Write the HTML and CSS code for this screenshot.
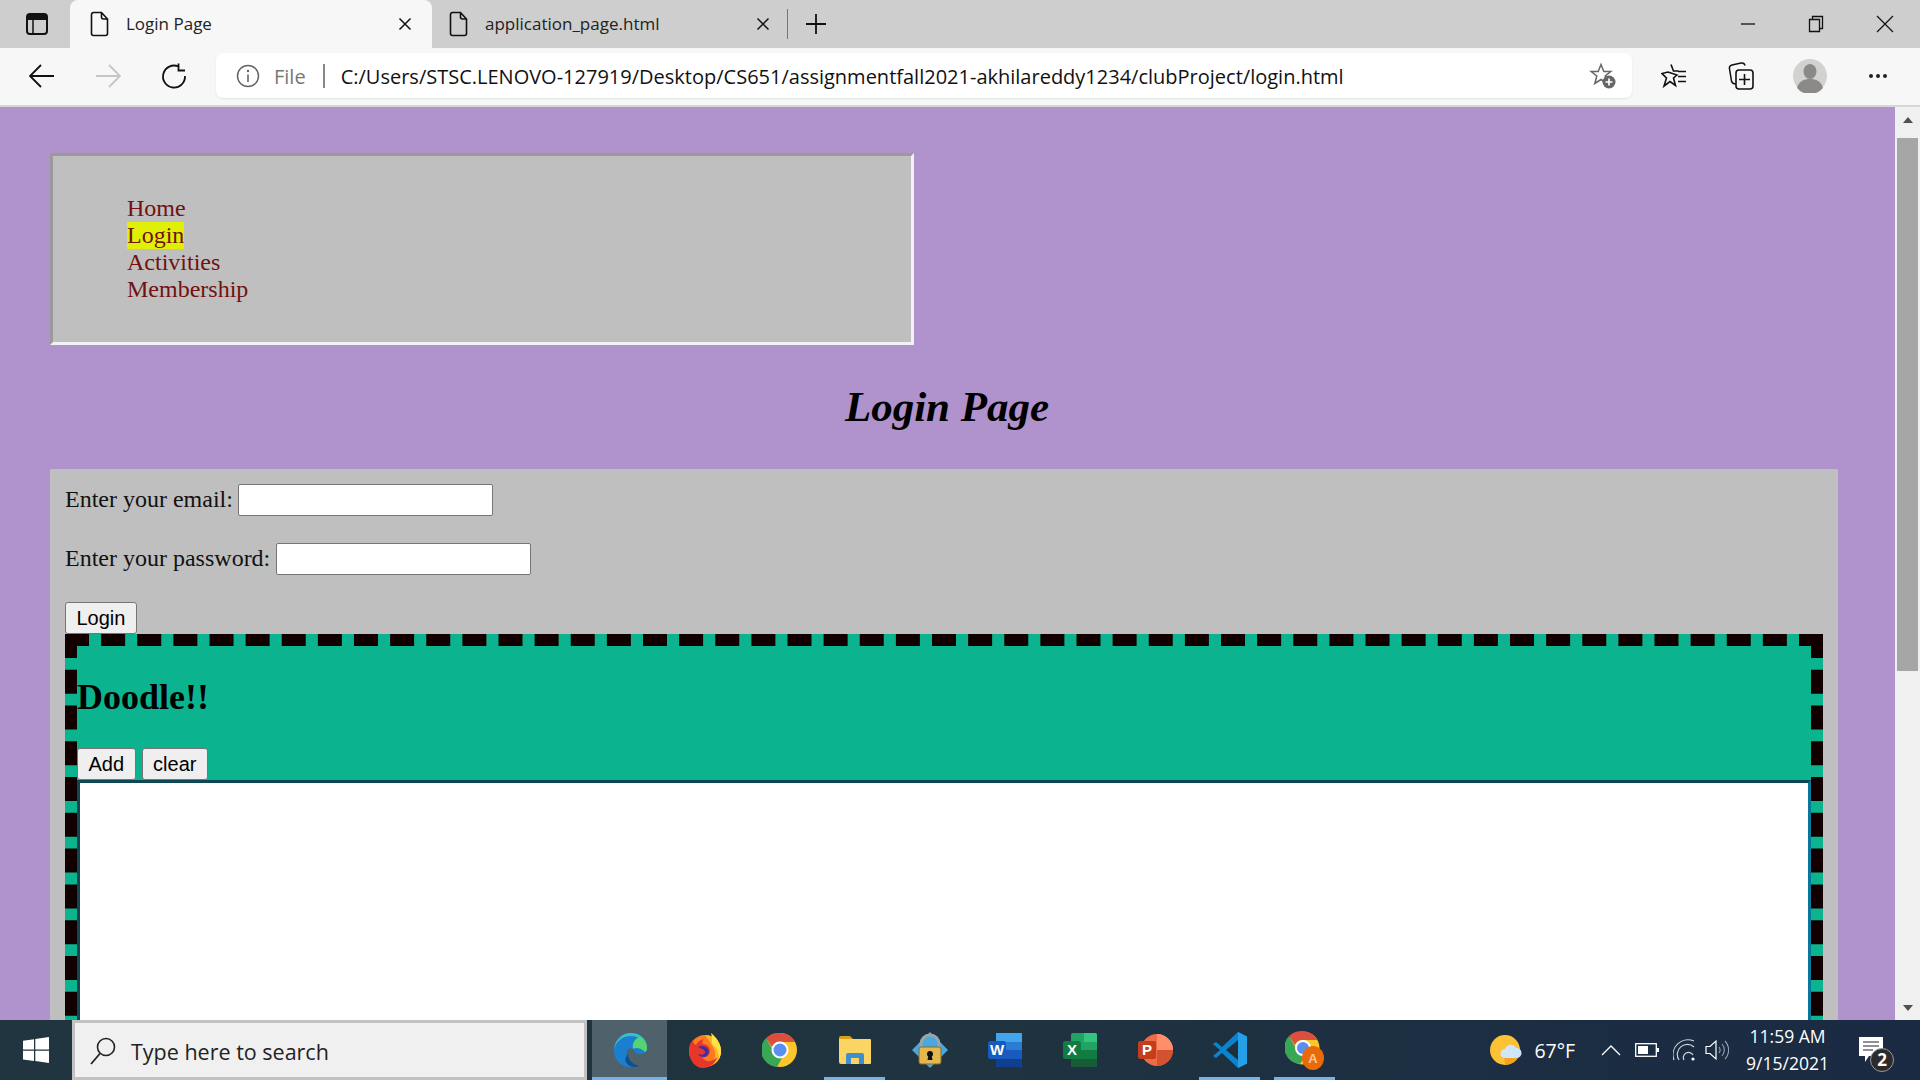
FILE: index.html
```html
<!DOCTYPE html>
<html>
    <head>
        <title>Login Page</title>
        <meta http-equiv="Content-Type" content="text/html; charset=utf-8"/>
        <link rel="stylesheet" href="styles.css">
    </head>
    <body>

    <svg class="defs" width="0" height="0">
        <symbol id="pageIcon" viewBox="0 0 20 26"><path d="M3.5 1.5h8l6 6.5v14.5a2 2 0 0 1-2 2h-12a2 2 0 0 1-2-2v-19a2 2 0 0 1 2-2zM11.5 1.5v4.500a2 2 0 0 0 2 2h4" fill="none" stroke="#111" stroke-width="1.600"/></symbol>
        <symbol id="closeIcon" viewBox="0 0 14 14"><path d="M1.500 1.500l11 11M12.500 1.500l-11 11" fill="none" stroke="#111" stroke-width="1.500"/></symbol>
    </svg>

    <div id="tabStrip">
        <div class="sidebarBtn">
            <svg width="22" height="22" viewBox="0 0 22 22"><rect x="1" y="1" width="20" height="20" rx="3" fill="none" stroke="#111" stroke-width="2"/><path d="M2 2h18v5H2z" fill="#111"/><path d="M7 7v14" stroke="#111" stroke-width="1.500"/></svg>
        </div>
        <div class="tab active">
            <svg class="tabIcon" width="20" height="26"><use href="#pageIcon"/></svg>
            <span class="tabTitle">Login Page</span>
            <svg class="tabClose" width="14" height="14"><use href="#closeIcon"/></svg>
        </div>
        <div class="tab">
            <svg class="tabIcon" width="20" height="26"><use href="#pageIcon"/></svg>
            <span class="tabTitle">application_page.html</span>
            <svg class="tabClose" width="14" height="14"><use href="#closeIcon"/></svg>
        </div>
        <div class="tabDivider"></div>
        <svg class="newTab" width="22" height="22" viewBox="0 0 22 22"><path d="M11 1v20M1 11h20" stroke="#111" stroke-width="1.800"/></svg>
        <div class="windowBtns">
            <svg width="16" height="16" viewBox="0 0 16 16"><path d="M1 8h14" stroke="#111" stroke-width="1.300"/></svg>
            <svg width="16" height="18" viewBox="0 0 16 18"><path d="M1.500 4.500h10v12h-10zM4.500 4.500v-3h10v12h-3" fill="none" stroke="#111" stroke-width="1.300"/></svg>
            <svg width="18" height="18" viewBox="0 0 18 18"><path d="M1 1l16 16M17 1L1 17" stroke="#111" stroke-width="1.200"/></svg>
        </div>
    </div>

    <div id="toolbar">
        <svg class="navIcon" width="26" height="24" viewBox="0 0 26 24"><path d="M1 12h24M12 1L1 12l11 11" fill="none" stroke="#111" stroke-width="1.800"/></svg>
        <svg class="navIcon" width="26" height="24" viewBox="0 0 26 24"><path d="M25 12H1M14 1l11 11-11 11" fill="none" stroke="#c6c6c6" stroke-width="1.800"/></svg>
        <svg class="navIcon" width="26" height="26" viewBox="0 0 26 26"><path d="M17.500 3.500A11 11 0 1 0 24 13M17.500 0.500v7h6.500" fill="none" stroke="#111" stroke-width="1.800"/></svg>
        <div id="addressBar">
            <svg class="infoIcon" width="24" height="24" viewBox="0 0 24 24"><circle cx="12" cy="12" r="10.500" fill="none" stroke="#666" stroke-width="1.500"/><path d="M12 10.500v7.500" stroke="#666" stroke-width="1.600"/><circle cx="12" cy="7" r="1.200" fill="#666"/></svg>
            <span class="fileLabel">File</span>
            <span class="addressSep"></span>
            <span class="url">C:/Users/STSC.LENOVO-127919/Desktop/CS651/assignmentfall2021-akhilareddy1234/clubProject/login.html</span>
            <svg class="starAdd" width="28" height="28" viewBox="0 0 28 28"><path d="M12 2.500l2.800 7h7l-5.600 4.500 2 7.500L12 17.500 5.800 21.500l2-7.500L2.200 9.500h7z" fill="none" stroke="#666" stroke-width="1.500"/><circle cx="20" cy="20" r="6.500" fill="#666"/><path d="M20 16.500v7M16.500 20h7" stroke="#fff" stroke-width="1.700"/></svg>
        </div>
        <div class="toolIcons">
            <svg width="28" height="28" viewBox="0 0 28 28"><path d="M10 2.500l2.500 6.500h5M16 13l-3.500 3 2 7.500L9 19.500 3 24l2.500-8L1 11.500l6-1.500z" fill="none" stroke="#111" stroke-width="1.600"/><path d="M17 9.500h8M17 14.500h8M17 19.500h8" stroke="#111" stroke-width="1.600"/></svg>
            <svg width="28" height="30" viewBox="0 0 28 30"><path d="M9 23c-3 0-4-1-4.500-3L2.500 8c-.4-2 .5-3.500 2.500-4l9-2c2-.4 3.500.3 4 2.500" fill="none" stroke="#111" stroke-width="1.500"/><rect x="9" y="9" width="17" height="19" rx="3" fill="none" stroke="#111" stroke-width="1.600"/><path d="M17.500 13v11M12 18.500h11" stroke="#111" stroke-width="1.600"/></svg>
            <svg class="avatar" width="34" height="34" viewBox="0 0 34 34"><circle cx="17" cy="17" r="17" fill="#d2d2d0"/><ellipse cx="17" cy="12.500" rx="6.500" ry="7.500" fill="#8c8a88"/><path d="M4 29c2-7 7-9 13-9s11 2 13 9a17 17 0 0 1-26 0z" fill="#8c8a88"/></svg>
            <div class="moreDots"><i></i><i></i><i></i></div>
        </div>
    </div>

    <div id="viewport">
        <div id="page">
            <div id="navBox">
                <ul>
                    <li><a>Home</a></li>
                    <li><a class="current">Login</a></li>
                    <li><a>Activities</a></li>
                    <li><a>Membership</a></li>
                </ul>
            </div>

            <h1>Login Page</h1>

            <div id="loginPanel">
                <div class="formRow emailRow">
                    <label>Enter your email:</label>
                    <input type="text">
                </div>
                <div class="formRow">
                    <label>Enter your password:</label>
                    <input type="password">
                </div>
                <div class="formRow">
                    <button>Login</button>
                </div>
                <div id="doodle">
                    <h2>Doodle!!</h2>
                    <div class="doodleBtns">
                        <button>Add</button>
                        <button>clear</button>
                    </div>
                    <div id="canvas"></div>
                </div>
            </div>
        </div>
        <div id="scrollbar">
            <div class="arrowUp"></div>
            <div class="thumb"></div>
            <div class="arrowDown"></div>
        </div>
    </div>

    <div id="taskbar">
        <div class="startBtn">
            <svg width="26" height="26" viewBox="0 0 26 26"><path d="M0 3.800l11-1.500v10.200H0zM12.300 2.100L26 0v12.500H12.300zM0 13.800h11V24L0 22.400zM12.300 13.800H26V26l-13.700-2z" fill="#fff"/></svg>
        </div>
        <div class="searchBox">
            <svg width="26" height="28" viewBox="0 0 26 28"><circle cx="16" cy="10" r="8.500" fill="none" stroke="#222" stroke-width="1.600"/><path d="M10 16.500L1 27" stroke="#222" stroke-width="1.800"/></svg>
            <span>Type here to search</span>
        </div>
        <div class="appIcons">
            <div class="app hover">
                <svg width="36" height="36" viewBox="0 0 36 36"><path d="M2 19C2 8 10 1 19 1c9 0 16 7 16 15 0 4-3 6-7 6-5 0-5-3-7-5-1.500-1.500-5-1-6 2-1.500 5 2 12 9 15-1 .5-3 1-6 1C9 35 2 28 2 19z" fill="#1a7fd0"/><path d="M2 19C3 10 10 4 19 4c7 0 13 4 16 12 0-9-7-15-16-15C10 1 2 8 2 19z" fill="#35c1c9"/><path d="M21 17c3-2 8-1 12 3 2-1 2-2.500 2-4 0-5-3-9-7-11-5 1-8 6-7 12z" fill="#56d46f"/><path d="M16 22c0 6 5 11 12 12-1 .5-5 1.500-9 .5-5-2-8-7-3-12.500z" fill="#0e4f94"/></svg>
            </div>
            <div class="app">
                <svg width="36" height="36" viewBox="0 0 36 36"><circle cx="18" cy="19" r="16" fill="#ff7a1f"/><path d="M18 3c10 0 16 8 16 16 0 8-5 14-12 15 6-4 8-12 4-19-2-4-5-7-8-12z" fill="#ffb326"/><path d="M2 19c0-5 1-8 4-11 0 3 1 4 3 5 1-3 4-5 8-6-2 2-2 4-1 5 4 0 7 3 7 7s-4 7-8 6c4 6 11 5 15 0-1 6-7 11-14 11C8 36 2 28 2 19z" fill="#e9362b"/><path d="M24 1c5 4 10 10 10 18 0 3-1 6-2 8 0-8-3-12-7-15 0-4 0-7-1-11z" fill="#ffe14a"/><path d="M11 15c3-2 8-1 10 2s0 7-3 8c-3 .5-6-1-7-3 3 1 6 1 7-1 1-2-2-4-7-6z" fill="#3d2fa8"/></svg>
            </div>
            <div class="app">
                <svg width="36" height="36" viewBox="0 0 36 36"><circle cx="18" cy="18" r="17" fill="#fbc52e"/><path d="M18 1a17 17 0 0 1 15 9H18a8 8 0 0 0-8 5L4 6a17 17 0 0 1 14-5z" fill="#dc4f3f"/><path d="M4 6l8 14a8 8 0 0 0 8 6l-5 9A17 17 0 0 1 4 6z" fill="#3aa757"/><circle cx="18" cy="18" r="8.500" fill="#fff"/><circle cx="18" cy="18" r="6.500" fill="#5a8ff0"/></svg>
            </div>
            <div class="app running">
                <svg width="34" height="30" viewBox="0 0 34 30"><path d="M1 3a2 2 0 0 1 2-2h9l3 3h-14z" fill="#d9a019"/><path d="M1 4h31a1 1 0 0 1 1 1v23a1 1 0 0 1-1 1H3a2 2 0 0 1-2-2z" fill="#fbd564"/><path d="M8 29v-9a2 2 0 0 1 2-2h14a2 2 0 0 1 2 2v9h-5v-6h-8v6z" fill="#3d8fd0"/></svg>
            </div>
            <div class="app">
                <svg width="36" height="36" viewBox="0 0 36 36"><path d="M18 0l18 18-18 18L0 18z" fill="#49a8e0"/><path d="M9 16v-4a9 9 0 0 1 18 0v4" fill="none" stroke="#9aa5ab" stroke-width="3"/><rect x="7" y="15" width="22" height="17" rx="2" fill="#e3b94f" stroke="#8b6b1f"/><circle cx="18" cy="22" r="3" fill="#111"/><path d="M16.500 23h3l1 5h-5z" fill="#111"/></svg>
            </div>
            <div class="app">
                <svg width="36" height="36" viewBox="0 0 36 36"><rect x="9" y="1" width="26" height="34" rx="2" fill="#2b7cd3"/><path d="M9 1h26v9H9z" fill="#41a5ee"/><path d="M9 18h26v9H9z" fill="#185abd"/><path d="M9 27h26v6a2 2 0 0 1-2 2H11a2 2 0 0 1-2-2z" fill="#103f91"/><rect x="1" y="9" width="18" height="18" rx="2" fill="#185abd"/><text x="10" y="23" class="appLetter">W</text></svg>
            </div>
            <div class="app">
                <svg width="36" height="36" viewBox="0 0 36 36"><rect x="9" y="1" width="26" height="34" rx="2" fill="#21a366"/><path d="M22 1h11a2 2 0 0 1 2 2v7H22z" fill="#33c481"/><path d="M9 18h26v9H9z" fill="#107c41"/><path d="M9 27h26v6a2 2 0 0 1-2 2H11a2 2 0 0 1-2-2z" fill="#185c37"/><rect x="1" y="9" width="18" height="18" rx="2" fill="#107c41"/><text x="10" y="23" class="appLetter">X</text></svg>
            </div>
            <div class="app">
                <svg width="36" height="36" viewBox="0 0 36 36"><circle cx="20" cy="18" r="16" fill="#ed6c47"/><path d="M20 2a16 16 0 0 1 16 16H20z" fill="#ff8f6b"/><path d="M20 18h16a16 16 0 0 1-16 16z" fill="#d35230"/><rect x="1" y="9" width="18" height="18" rx="2" fill="#c43e1c"/><text x="10" y="23" class="appLetter">P</text></svg>
            </div>
            <div class="app running">
                <svg width="36" height="38" viewBox="0 0 36 38"><path d="M26 1l9 4.500v27L26 37 10 22l-6 5-3-2 7-6-7-6 3-2 6 5z" fill="#0a84cf"/><path d="M26 9v20L14 19z" fill="#1f2f3a"/><path d="M26 1l9 4.500v27L26 37z" fill="#23a0e6"/></svg>
            </div>
            <div class="app running">
                <svg width="40" height="40" viewBox="0 0 40 40"><circle cx="18" cy="18" r="16.500" fill="#fbc52e"/><path d="M18 1.500a16.500 16.500 0 0 1 14.500 8.500H18a8 8 0 0 0-8 5L4 6a16.500 16.500 0 0 1 14-4.500z" fill="#dc4f3f"/><path d="M4 6l8 14a8 8 0 0 0 8 6l-5 8A16.500 16.500 0 0 1 4 6z" fill="#3aa757"/><circle cx="18" cy="18" r="8" fill="#fff"/><circle cx="18" cy="18" r="6" fill="#5a8ff0"/><ellipse cx="28" cy="28" rx="11" ry="12" fill="#ea6a0a"/><text x="28" y="33" class="badgeLetter">A</text></svg>
            </div>
        </div>
        <div class="tray">
            <svg class="weatherIcon" width="32" height="32" viewBox="0 0 32 32"><circle cx="15" cy="16" r="15" fill="#fcc234"/><path d="M15 31a15 15 0 0 0 14-9H14z" fill="#f3a21c"/><path d="M15 24a4.500 4.500 0 0 1 0-9 6 6 0 0 1 11-1 5 5 0 0 1 1 10z" fill="#cfe6fa"/></svg>
            <span class="temp">67°F</span>
            <svg width="20" height="12" viewBox="0 0 20 12"><path d="M1 11l9-9 9 9" fill="none" stroke="#fff" stroke-width="1.300"/></svg>
            <svg width="24" height="14" viewBox="0 0 24 14"><rect x=".7" y=".7" width="20.600" height="12.600" fill="none" stroke="#fff" stroke-width="1.300"/><rect x="3" y="3" width="10" height="8" fill="#fff"/><path d="M22 5h2v4h-2z" fill="#fff"/></svg>
            <svg width="24" height="22" viewBox="0 0 24 22"><path d="M1 21a15 15 0 0 1 20-19M6 21a10 10 0 0 1 15-13M11 21a5 5 0 0 1 9-5" fill="none" stroke="#cfd3da" stroke-width="1.200"/><circle cx="20" cy="20" r="1.600" fill="#fff"/></svg>
            <svg class="speaker" width="24" height="22" viewBox="0 0 24 22"><path d="M1 7.500h4l6-5.500v18l-6-5.500H1z" fill="none" stroke="#fff" stroke-width="1.200"/><path d="M14 8a5 5 0 0 1 0 6M17 5a9 9 0 0 1 0 12M20 2a13 13 0 0 1 0 18" fill="none" stroke="#9aa3ad" stroke-width="1.100"/></svg>
            <div class="clock">
                <span>11:59 AM</span>
                <span>9/15/2021</span>
            </div>
            <div class="notify">
                <svg width="24" height="26" viewBox="0 0 24 26"><path d="M0 0h24v19H10l-4 6v-6H0z" fill="#fff"/><path d="M4 5h16M4 9h16M4 13h10" stroke="#223" stroke-width="1.200"/></svg>
                <span class="notifyBadge">2</span>
            </div>
        </div>
    </div>

    </body>
</html>
```

FILE: styles.css
```css
html, body {
    height: 100%;
    margin: 0;
    padding: 0;
    overflow: hidden;
}

body {
    display: flex;
    flex-direction: column;
    font-family: "Liberation Serif", serif;
}

.defs {
    position: absolute;
}

/**** BROWSER CHROME ****/

#tabStrip {
    display: flex;
    align-items: center;
    height: 48px;
    flex: none;
    background-color: #cecece;
    font-family: "Open Sans", sans-serif;
    font-size: 17px;
    color: #222;
}

.sidebarBtn {
    display: flex;
    justify-content: center;
    width: 70px;
    padding-left: 2px;
    margin-right: -2px;
}

.tab {
    display: flex;
    align-items: center;
    box-sizing: border-box;
    width: 362px;
    height: 48px;
    padding: 0 20px 0 20px;
}

.tab.active {
    background-color: #f7f7f7;
    border-radius: 8px 8px 0 0;
}

.tab + .tab {
    width: 355px;
    padding: 0 17px 0 17px;
}

.tabIcon {
    flex: none;
}

.tabTitle {
    flex: 1;
    margin: 0 0 2px 16px;
}

.tabDivider {
    width: 1px;
    height: 30px;
    background-color: #777;
}

.newTab {
    margin-left: 17px;
}

.windowBtns {
    display: flex;
    align-items: center;
    gap: 52px;
    margin-left: auto;
    margin-right: 26px;
}

#toolbar {
    display: flex;
    align-items: center;
    box-sizing: border-box;
    height: 59px;
    flex: none;
    padding: 0 0 2px 29px;
    background-color: #f7f7f7;
    border-bottom: 2px solid #d6d6d6;
}

.navIcon {
    margin-right: 40px;
}

#addressBar {
    display: flex;
    align-items: center;
    box-sizing: border-box;
    width: 1416px;
    height: 45px;
    margin-left: -11px;
    padding: 0 15px 0 20px;
    background-color: white;
    border-radius: 7px;
    box-shadow: 0 1px 2px rgba(0, 0, 0, 0.08);
}

.fileLabel {
    margin-left: 14px;
    padding-top: 2px;
    font: 20px "Open Sans", sans-serif;
    color: #777;
}

.addressSep {
    width: 2px;
    height: 24px;
    margin: 0 16px 0 17px;
    background-color: #888;
}

.url {
    flex: 1;
    padding-top: 2px;
    font: 20px "Open Sans", sans-serif;
    color: #111;
    white-space: nowrap;
}

.toolIcons {
    display: flex;
    align-items: center;
    gap: 38px;
    margin-left: 29px;
}

.avatar {
    margin: 0 -2px 0 0;
}

.moreDots {
    display: flex;
    gap: 3px;
    margin-left: 6px;
}

.moreDots i {
    width: 4px;
    height: 4px;
    border-radius: 50%;
    background-color: #222;
}

/**** PAGE ****/

#viewport {
    display: flex;
    flex: 1;
    min-height: 0;
}

#page {
    flex: 1;
    min-width: 0;
    overflow: hidden;
    padding: 46px 57px 0 50px;
    background-color: #b092cc;
}

#navBox {
    box-sizing: border-box;
    width: 864px;
    height: 192px;
    padding: 39px 0 0 74px;
    background-color: #bfbfbf;
    border: 3px solid;
    border-color: #9a9a9a #f2f2f2 #f2f2f2 #9a9a9a;
    font-size: 24px;
    line-height: 27px;
    color: #731010;
}

#navBox ul {
    list-style: none;
    margin: 0;
    padding: 0;
}

#navBox a {
    display: inline-block;
}

#navBox a.current {
    background-color: #e0ef06;
}

h1 {
    height: 124px;
    margin: 0;
    padding-left: 6px;
    font-size: 43px;
    font-style: italic;
    font-weight: bold;
    line-height: 124px;
    text-align: center;
    color: black;
}

#loginPanel {
    padding: 15px 15px 0 15px;
    background-color: #bfbfbf;
}

.formRow {
    display: flex;
    align-items: center;
    gap: 6px;
    height: 32px;
    margin-bottom: 27px;
    font-size: 24px;
    color: #111;
}

.formRow.emailRow {
    gap: 5px;
}

.formRow label {
    margin-bottom: 2px;
}

.formRow:nth-child(3) {
    margin-bottom: 0;
}

input {
    box-sizing: border-box;
    width: 255px;
    height: 32px;
    padding: 0;
    background-color: white;
    border: 1px solid #767676;
    border-radius: 2px;
}

button {
    box-sizing: border-box;
    height: 32px;
    padding: 0 10.500px;
    font: 20px "Liberation Sans", sans-serif;
    color: black;
    background-color: #efefef;
    border: 1px solid #767676;
    border-radius: 3px;
}

#doodle {
    height: 954px;
    box-sizing: border-box;
    background-color: #0bb48f;
    border: 12px dashed #120000;
}

h2 {
    margin: 0;
    height: 102px;
    font-size: 36px;
    font-weight: bold;
    line-height: 103px;
    color: black;
}

.doodleBtns {
    display: flex;
    gap: 6px;
    height: 32px;
}

#canvas {
    box-sizing: border-box;
    height: 700px;
    background-color: white;
    border: 3px solid #0d4753;
    border-right-color: #07789a;
    border-bottom-color: #07789a;
}

/**** SCROLLBAR ****/

#scrollbar {
    display: flex;
    flex-direction: column;
    align-items: center;
    width: 25px;
    flex: none;
    background-color: #f0f0f0;
}

.arrowUp {
    width: 0;
    height: 0;
    margin-top: 10px;
    border: 5px solid transparent;
    border-top: none;
    border-bottom: 6px solid #505050;
}

.thumb {
    width: 21px;
    height: 533px;
    margin-top: 15px;
    background-color: #a6a6a6;
}

.arrowDown {
    width: 0;
    height: 0;
    margin-top: auto;
    margin-bottom: 9px;
    border: 5px solid transparent;
    border-bottom: none;
    border-top: 6px solid #505050;
}

/**** TASKBAR ****/

#taskbar {
    display: flex;
    align-items: stretch;
    height: 60px;
    flex: none;
    background: linear-gradient(90deg, #20353f 0%, #1f3340 50%, #1a2a43 100%);
    color: white;
}

.startBtn {
    display: flex;
    align-items: center;
    justify-content: center;
    width: 72px;
}

.searchBox {
    display: flex;
    align-items: center;
    gap: 15px;
    box-sizing: border-box;
    width: 515px;
    padding: 2px 0 0 15px;
    background-color: #f0f0f0;
    border: 3px solid #c2c2c2;
    font: 21.500px "Open Sans", sans-serif;
    color: #222;
}

.appIcons {
    display: flex;
    margin-left: 5px;
}

.app {
    position: relative;
    display: flex;
    align-items: center;
    justify-content: center;
    width: 75px;
}

.app.hover {
    background-color: #4f626b;
}

.app.hover::after, .app.running::after {
    content: "";
    position: absolute;
    bottom: 0;
    left: 7px;
    right: 7px;
    height: 3px;
    background-color: #76b2e3;
}

.app.hover::after {
    left: 0;
    right: 0;
}

.appLetter {
    font: bold 15px "Liberation Sans", sans-serif;
    fill: white;
    text-anchor: middle;
}

.badgeLetter {
    font: bold 13px "Liberation Sans", sans-serif;
    fill: #f5c9a0;
    text-anchor: middle;
}

.tray {
    display: flex;
    align-items: center;
    gap: 14px;
    margin-left: auto;
    padding-right: 25px;
}

.temp {
    margin: 0 12px 0 -2px;
    font: 19.500px "Open Sans", sans-serif;
}

.speaker {
    margin-left: -6px;
}

.clock {
    display: flex;
    flex-direction: column;
    align-items: center;
    gap: 6px;
    margin: 0 16px 0 3px;
    font: 17.500px/21px "Open Sans", sans-serif;
}

.notify {
    position: relative;
    display: flex;
    width: 36px;
}

.notifyBadge {
    position: absolute;
    left: 11px;
    top: 11px;
    box-sizing: border-box;
    width: 24px;
    height: 24px;
    background-color: #2b2b2b;
    border: 1px solid #9a9a9a;
    border-radius: 50%;
    font: bold 17px/22px "Open Sans", sans-serif;
    text-align: center;
}
```
